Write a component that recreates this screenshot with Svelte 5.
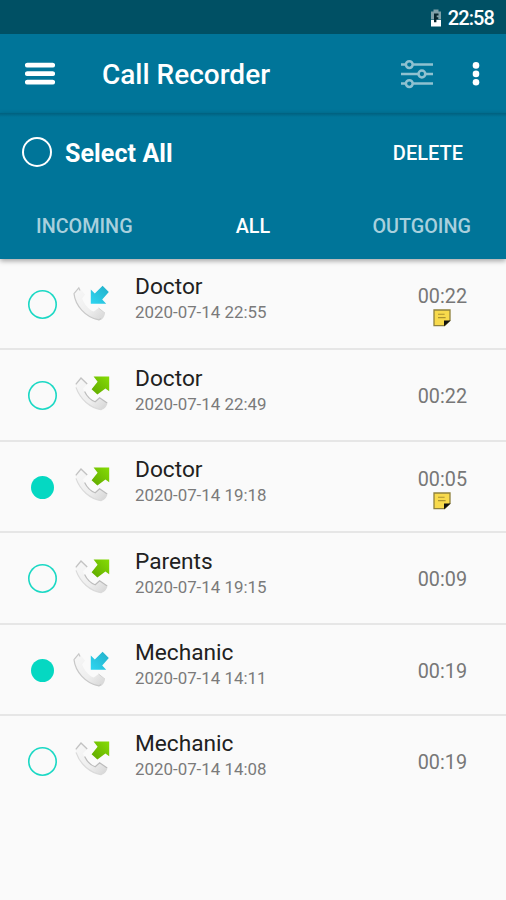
<script lang="ts">
  interface Call {
    name: string;
    date: string;
    duration: string;
    incoming: boolean;
    selected: boolean;
    note: boolean;
  }

  let calls: Call[] = $state([
    { name: "Doctor", date: "2020-07-14 22:55", duration: "00:22", incoming: true, selected: false, note: true },
    { name: "Doctor", date: "2020-07-14 22:49", duration: "00:22", incoming: false, selected: false, note: false },
    { name: "Doctor", date: "2020-07-14 19:18", duration: "00:05", incoming: false, selected: true, note: true },
    { name: "Parents", date: "2020-07-14 19:15", duration: "00:09", incoming: false, selected: false, note: false },
    { name: "Mechanic", date: "2020-07-14 14:11", duration: "00:19", incoming: true, selected: true, note: false },
    { name: "Mechanic", date: "2020-07-14 14:08", duration: "00:19", incoming: false, selected: false, note: false },
  ]);

  let allSelected = $derived(calls.every((call) => call.selected));

  function toggleAll() {
    const next = !allSelected;
    calls.forEach((call) => (call.selected = next));
  }

  function deleteSelected() {
    calls = calls.filter((call) => !call.selected);
  }
</script>

<svg class="defs" width="0" height="0" aria-hidden="true">
  <defs>
    <linearGradient id="phone" x1="0" y1="0" x2="1" y2="1">
      <stop offset="0" stop-color="#f8f8f8" />
      <stop offset="0.6" stop-color="#eeeeee" />
      <stop offset="1" stop-color="#d4d4d4" />
    </linearGradient>
    <linearGradient id="blue" x1="1" y1="0" x2="0" y2="1">
      <stop offset="0" stop-color="#22afc8" />
      <stop offset="1" stop-color="#2fd6f2" />
    </linearGradient>
    <linearGradient id="green" x1="1" y1="0" x2="0" y2="1">
      <stop offset="0" stop-color="#86dc04" />
      <stop offset="1" stop-color="#5fa800" />
    </linearGradient>
  </defs>
</svg>

<div class="screen">
  <div class="status">
    <svg width="12" height="18" viewBox="0 0 12 18">
      <path d="M3.5 0.5h5v2h2.5v8H1v-8h2.5z" fill="#7fa0a8" />
      <path d="M1 11h10v6.5H1z" fill="#fff" />
      <path d="M4 4.5h4.5v2H6.7v1.8h1.6v2H6.4v3H4z" fill="#06242c" />
    </svg>
    <span>22:58</span>
  </div>

  <header>
    <button class="menu" aria-label="Menu">
      <svg width="30" height="24" viewBox="0 0 30 24">
        <path d="M2.3 3.2h25.4M2.3 11.7h25.4M2.3 20.2h25.4" stroke="#fff" stroke-width="4.8" stroke-linecap="round" />
      </svg>
    </button>
    <h1>Call Recorder</h1>
    <button class="filter" aria-label="Filter">
      <svg width="32" height="30" viewBox="0 0 32 30" fill="none" stroke="#8fc1d0" stroke-width="2.5">
        <path d="M0 5.6h4.6M12 5.6h20M0 15h17.2M24.6 15H32M0 24.6h4.6M12 24.6h20" />
        <circle cx="8.3" cy="5.6" r="3.4" />
        <circle cx="20.9" cy="15" r="3.4" />
        <circle cx="8.3" cy="24.6" r="3.4" />
      </svg>
    </button>
    <button class="more" aria-label="More">
      <svg width="8" height="26" viewBox="0 0 8 26" fill="#fff">
        <circle cx="4" cy="4.4" r="3.3" />
        <circle cx="4" cy="12.9" r="3.3" />
        <circle cx="4" cy="21.3" r="3.3" />
      </svg>
    </button>
  </header>

  <div class="panel">
    <div class="select">
      <button class="radio light" class:checked={allSelected} onclick={toggleAll} aria-label="Select all"></button>
      <span class="label">Select All</span>
      <button class="delete" onclick={deleteSelected}>DELETE</button>
    </div>
    <nav>
      <span>INCOMING</span>
      <span class="active">ALL</span>
      <span>OUTGOING</span>
    </nav>
  </div>

  <ul>
    {#each calls as call}
      <li>
        <button
          class="radio"
          class:checked={call.selected}
          onclick={() => (call.selected = !call.selected)}
          aria-label="Select call"
        ></button>
        <svg class="type" width="40" height="40" viewBox="0 0 40 40">
          {#if call.incoming}
            <path
              d="M7.2 3.6C4 5 1.6 7.4 2 10.4C3.6 21 14 33.6 27.2 36.2C30 36 32.4 33 33 29.4L26.6 24L21.8 27.6C16.5 25.2 12 20 10.2 14.4L13 10.6Z"
              fill="url(#phone)"
            />
            <path d="M8 6.4L6.8 3.8L2 9.6C3.2 21 13 33.4 27 35.9L29 34.4" fill="none" stroke="#c8c8c8" stroke-width="1.2" />
            <path d="M26.6 24L33 29.2" fill="none" stroke="#d2d2d2" />
            <path d="M18.8 5.6L22.8 9.4L30.6 1.8L36.8 8L30.2 15.4L34.2 19.8H18.8Z" fill="url(#blue)" />
          {:else}
            <path
              d="M9 1.8C6 3.4 3.4 5.6 3.6 8.6C5 20 16 31.6 29 33.8C32 33.6 34.8 30.6 35.4 27L27.6 21.8L23.2 25.8C18 23.6 13 18 11 12.4L15.2 8Z"
              fill="url(#phone)"
            />
            <path d="M3.8 8.4L9 2L15.2 8" fill="none" stroke="#c2c2c2" stroke-width="1.3" />
            <path d="M12.6 15.6C15 20.6 19 24.4 23.2 25.8L27.6 21.8L35.2 27" fill="none" stroke="#bcbcbc" stroke-width="1.2" />
            <path d="M4 11.4C8 23 18 32 29 33.6L35 27.6" fill="none" stroke="#dadada" stroke-width="1.2" />
            <path d="M21.6 0.4H37.2V15.2L33.4 12.4L25.4 18.6L19.6 13.2L25.6 5.8Z" fill="url(#green)" />
          {/if}
        </svg>
        <div class="info">
          <p class="name">{call.name}</p>
          <p class="date">{call.date}</p>
        </div>
        <div class="side">
          <span>{call.duration}</span>
          {#if call.note}
            <svg width="18" height="18" viewBox="0 0 18 18">
              <path d="M1 1h16v10.4L11.6 16.6H1z" fill="#f8da4c" stroke="#8f813c" stroke-width="1.3" />
              <path d="M5 5.2h6.6M5 8.6h7.6" stroke="#ab9330" stroke-width="1.1" />
              <path d="M11 17.3v-5.8h6.6z" fill="#111" />
            </svg>
          {/if}
        </div>
      </li>
    {/each}
  </ul>
</div>

<style>
  :global(body) {
    background: #fafafa;
  }
  .defs {
    display: block;
  }
  .screen {
    height: 900px;
    overflow: hidden;
    background: #fafafa;
    font-family: Roboto, sans-serif;
  }
  button {
    display: block;
    padding: 0;
    border: 0;
    background: none;
    color: inherit;
    font: inherit;
  }
  svg {
    display: block;
    flex: none;
  }
  .status {
    display: flex;
    align-items: center;
    justify-content: flex-end;
    gap: 6px;
    box-sizing: border-box;
    height: 34px;
    padding: 2px 12px 0 0;
    background: #005064;
    color: #fff;
    font-size: 20px;
    font-weight: 500;
    line-height: 32px;
    letter-spacing: -0.9px;
  }
  header {
    display: flex;
    align-items: center;
    box-sizing: border-box;
    height: 79px;
    padding: 0 26px 0 25px;
    background: #007599;
    color: #fff;
  }
  h1 {
    flex: 1;
    margin: 2px 0 0 47px;
    font-size: 28px;
    font-weight: 500;
    line-height: 32px;
  }
  .more {
    margin-left: 39px;
  }
  .panel {
    height: 146px;
    background: linear-gradient(#00607f, #007599 4px);
    color: #fff;
    box-shadow: 0 2px 5px rgba(0, 0, 0, 0.35);
  }
  .select {
    display: flex;
    align-items: center;
    height: 80px;
    padding: 0 43px 0 22px;
  }
  .radio {
    flex: none;
    box-sizing: border-box;
    width: 29px;
    height: 29px;
    border-radius: 50%;
    box-shadow: inset 0 0 0 1.6px #1bd8c4;
  }
  .radio.light {
    width: 30px;
    height: 30px;
    margin-top: -2px;
    box-shadow: inset 0 0 0 2px #fff;
  }
  .radio.checked {
    border: 3px solid transparent;
    background: #05d8c2 padding-box;
    box-shadow: none;
  }
  .label {
    flex: 1;
    margin-left: 13px;
    font-size: 25px;
    font-weight: 700;
    letter-spacing: 0.1px;
  }
  .delete {
    font-size: 20px;
    font-weight: 500;
  }
  nav {
    display: grid;
    grid-template-columns: repeat(3, 1fr);
    align-items: center;
    height: 67px;
    color: #a9d0dd;
    font-size: 19.8px;
    font-weight: 500;
    text-align: center;
  }
  .active {
    color: #fff;
  }
  ul {
    margin: 0;
    padding: 0;
    list-style: none;
  }
  li {
    display: flex;
    align-items: center;
    box-sizing: border-box;
    height: 91.4px;
    padding: 1.6px 39px 0 28px;
    border-bottom: 2px solid #e6e6e6;
  }
  li:last-child {
    border-bottom-color: transparent;
  }
  .type {
    margin-left: 15px;
  }
  .info {
    flex: 1;
    margin: -11px 0 0 23px;
  }
  p {
    margin: 0;
  }
  .name {
    color: #212121;
    font-size: 22.7px;
    line-height: 28px;
  }
  .date {
    color: #7a7a7a;
    font-size: 16.9px;
    line-height: 23px;
  }
  .side {
    display: flex;
    flex-direction: column;
    align-items: center;
    padding-top: 3px;
    color: #777;
    font-size: 19.8px;
    line-height: 24px;
  }
</style>
